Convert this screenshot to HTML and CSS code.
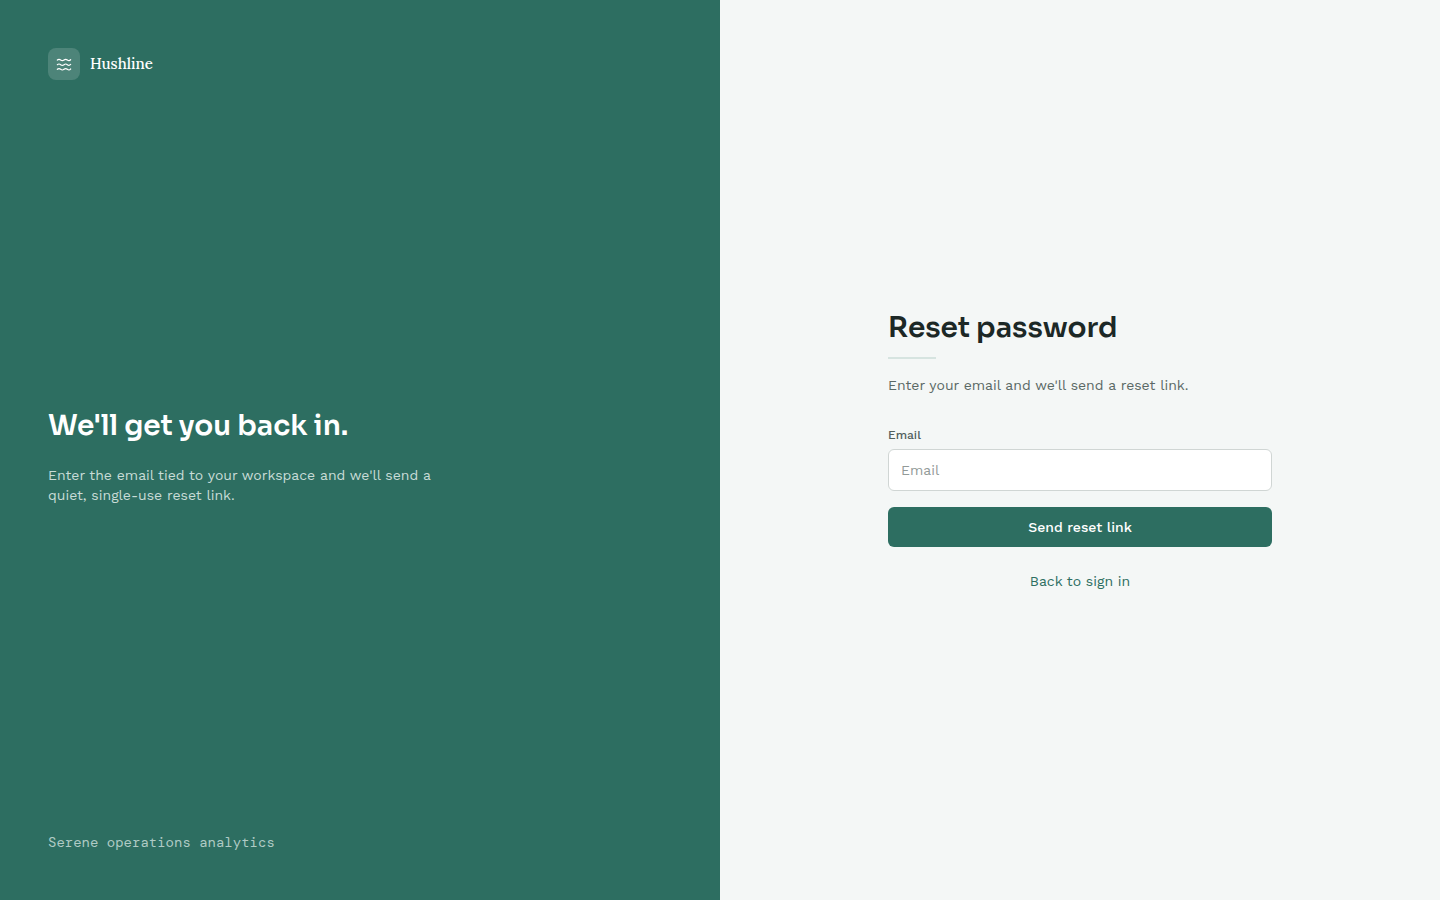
FILE: index.html
```html
<!DOCTYPE html>
<html lang="en">
<head>
<meta charset="utf-8">
<meta name="viewport" content="width=device-width, initial-scale=1">
<title>Reset password · Hushline</title>
<link rel="stylesheet" href="styles.css">
</head>
<body>
<div class="auth">
  <aside class="intro">
    <div class="brand">
      <span class="brand-mark">
        <svg class="brand-icon" viewBox="0 0 24 24" aria-hidden="true">
          <path d="M2 6c.6-.5 1.2-1 2.5-1C7 5 7 7 9.5 7c2.6 0 2.4-2 5-2 2.5 0 2.5 2 5 2 1.3 0 1.9-.8 2.5-1.5"/>
          <path d="M2 13c.6-.5 1.2-1 2.5-1C7 12 7 14 9.5 14c2.6 0 2.4-2 5-2 2.5 0 2.5 2 5 2 1.3 0 1.9-.8 2.5-1.5"/>
          <path d="M2 20c.6-.5 1.2-1 2.5-1C7 19 7 21 9.5 21c2.6 0 2.4-2 5-2 2.5 0 2.5 2 5 2 1.3 0 1.9-.8 2.5-1.5"/>
        </svg>
      </span>
      <span class="brand-name">Hushline</span>
    </div>
    <div class="message">
      <h2 class="title">We'll get you back in.</h2>
      <p class="message-text">Enter the email tied to your workspace and we'll send a quiet, single-use reset link.</p>
    </div>
    <p class="tagline">Serene operations analytics</p>
  </aside>
  <main class="panel">
    <form class="form">
      <h1 class="title">Reset password</h1>
      <hr class="rule">
      <p class="hint">Enter your email and we'll send a reset link.</p>
      <label class="label" for="email">Email</label>
      <input class="input" id="email" type="email" placeholder="Email">
      <button class="button" type="submit">Send reset link</button>
      <a class="back" href="#">Back to sign in</a>
    </form>
  </main>
</div>
</body>
</html>
```
FILE: styles.css
```css
* { box-sizing: border-box; }

body {
  margin: 0;
  background: #f4f7f6;
  color: #1c2826;
  font: 14px/20px "Work Sans", "Noto Sans", sans-serif;
}

.auth {
  display: grid;
  grid-template-columns: 1fr 1fr;
  min-height: 100vh;
}

.intro {
  display: flex;
  flex-direction: column;
  justify-content: space-between;
  padding: 48px;
  background: #2d6e61;
  color: #fff;
}

.brand {
  display: flex;
  align-items: center;
  gap: 10px;
}

.brand-mark {
  display: grid;
  place-items: center;
  width: 32px;
  height: 32px;
  border-radius: 8px;
  background: #4d8479;
}

.brand-icon {
  width: 16px;
  height: 16px;
  fill: none;
  stroke: #fff;
  stroke-width: 1.8;
  stroke-linecap: round;
  stroke-linejoin: round;
}

.brand-name {
  font: 500 15px/24px "Lora", "Liberation Serif", serif;
}

.title {
  margin: 0;
  font: 600 28px/38px "Sora", Inter, sans-serif;
}

.message-text {
  max-width: 384px;
  margin: 20px 0 0;
  color: #c8dcd7;
}

.tagline {
  margin: 0;
  color: #b0cbc5;
  font: 14px/20px "DM Mono", "Liberation Mono", monospace;
}

.panel {
  display: grid;
  place-items: center;
  padding: 48px;
}

.form {
  display: flex;
  flex-direction: column;
  width: 100%;
  max-width: 384px;
}

.rule {
  width: 48px;
  height: 2px;
  margin: 10px 0 16px;
  border: 0;
  background: #d6e4e0;
}

.hint {
  margin: 0 0 32px;
  color: #5a6965;
}

.label {
  margin-bottom: 6px;
  color: #52605d;
  font-size: 12px;
  line-height: 16px;
  font-weight: 500;
}

.input {
  height: 42px;
  padding: 0 12px;
  border: 1px solid #d0d6d4;
  border-radius: 6px;
  background: #fff;
  color: inherit;
  font: inherit;
}

.input::placeholder { color: #929a98; }

.button {
  height: 40px;
  margin: 16px 0 24px;
  border: 0;
  border-radius: 6px;
  background: #2d6e61;
  color: #fff;
  font: inherit;
  font-weight: 500;
  cursor: pointer;
}

.back {
  align-self: center;
  color: #2d6e61;
  text-decoration: none;
}
```
